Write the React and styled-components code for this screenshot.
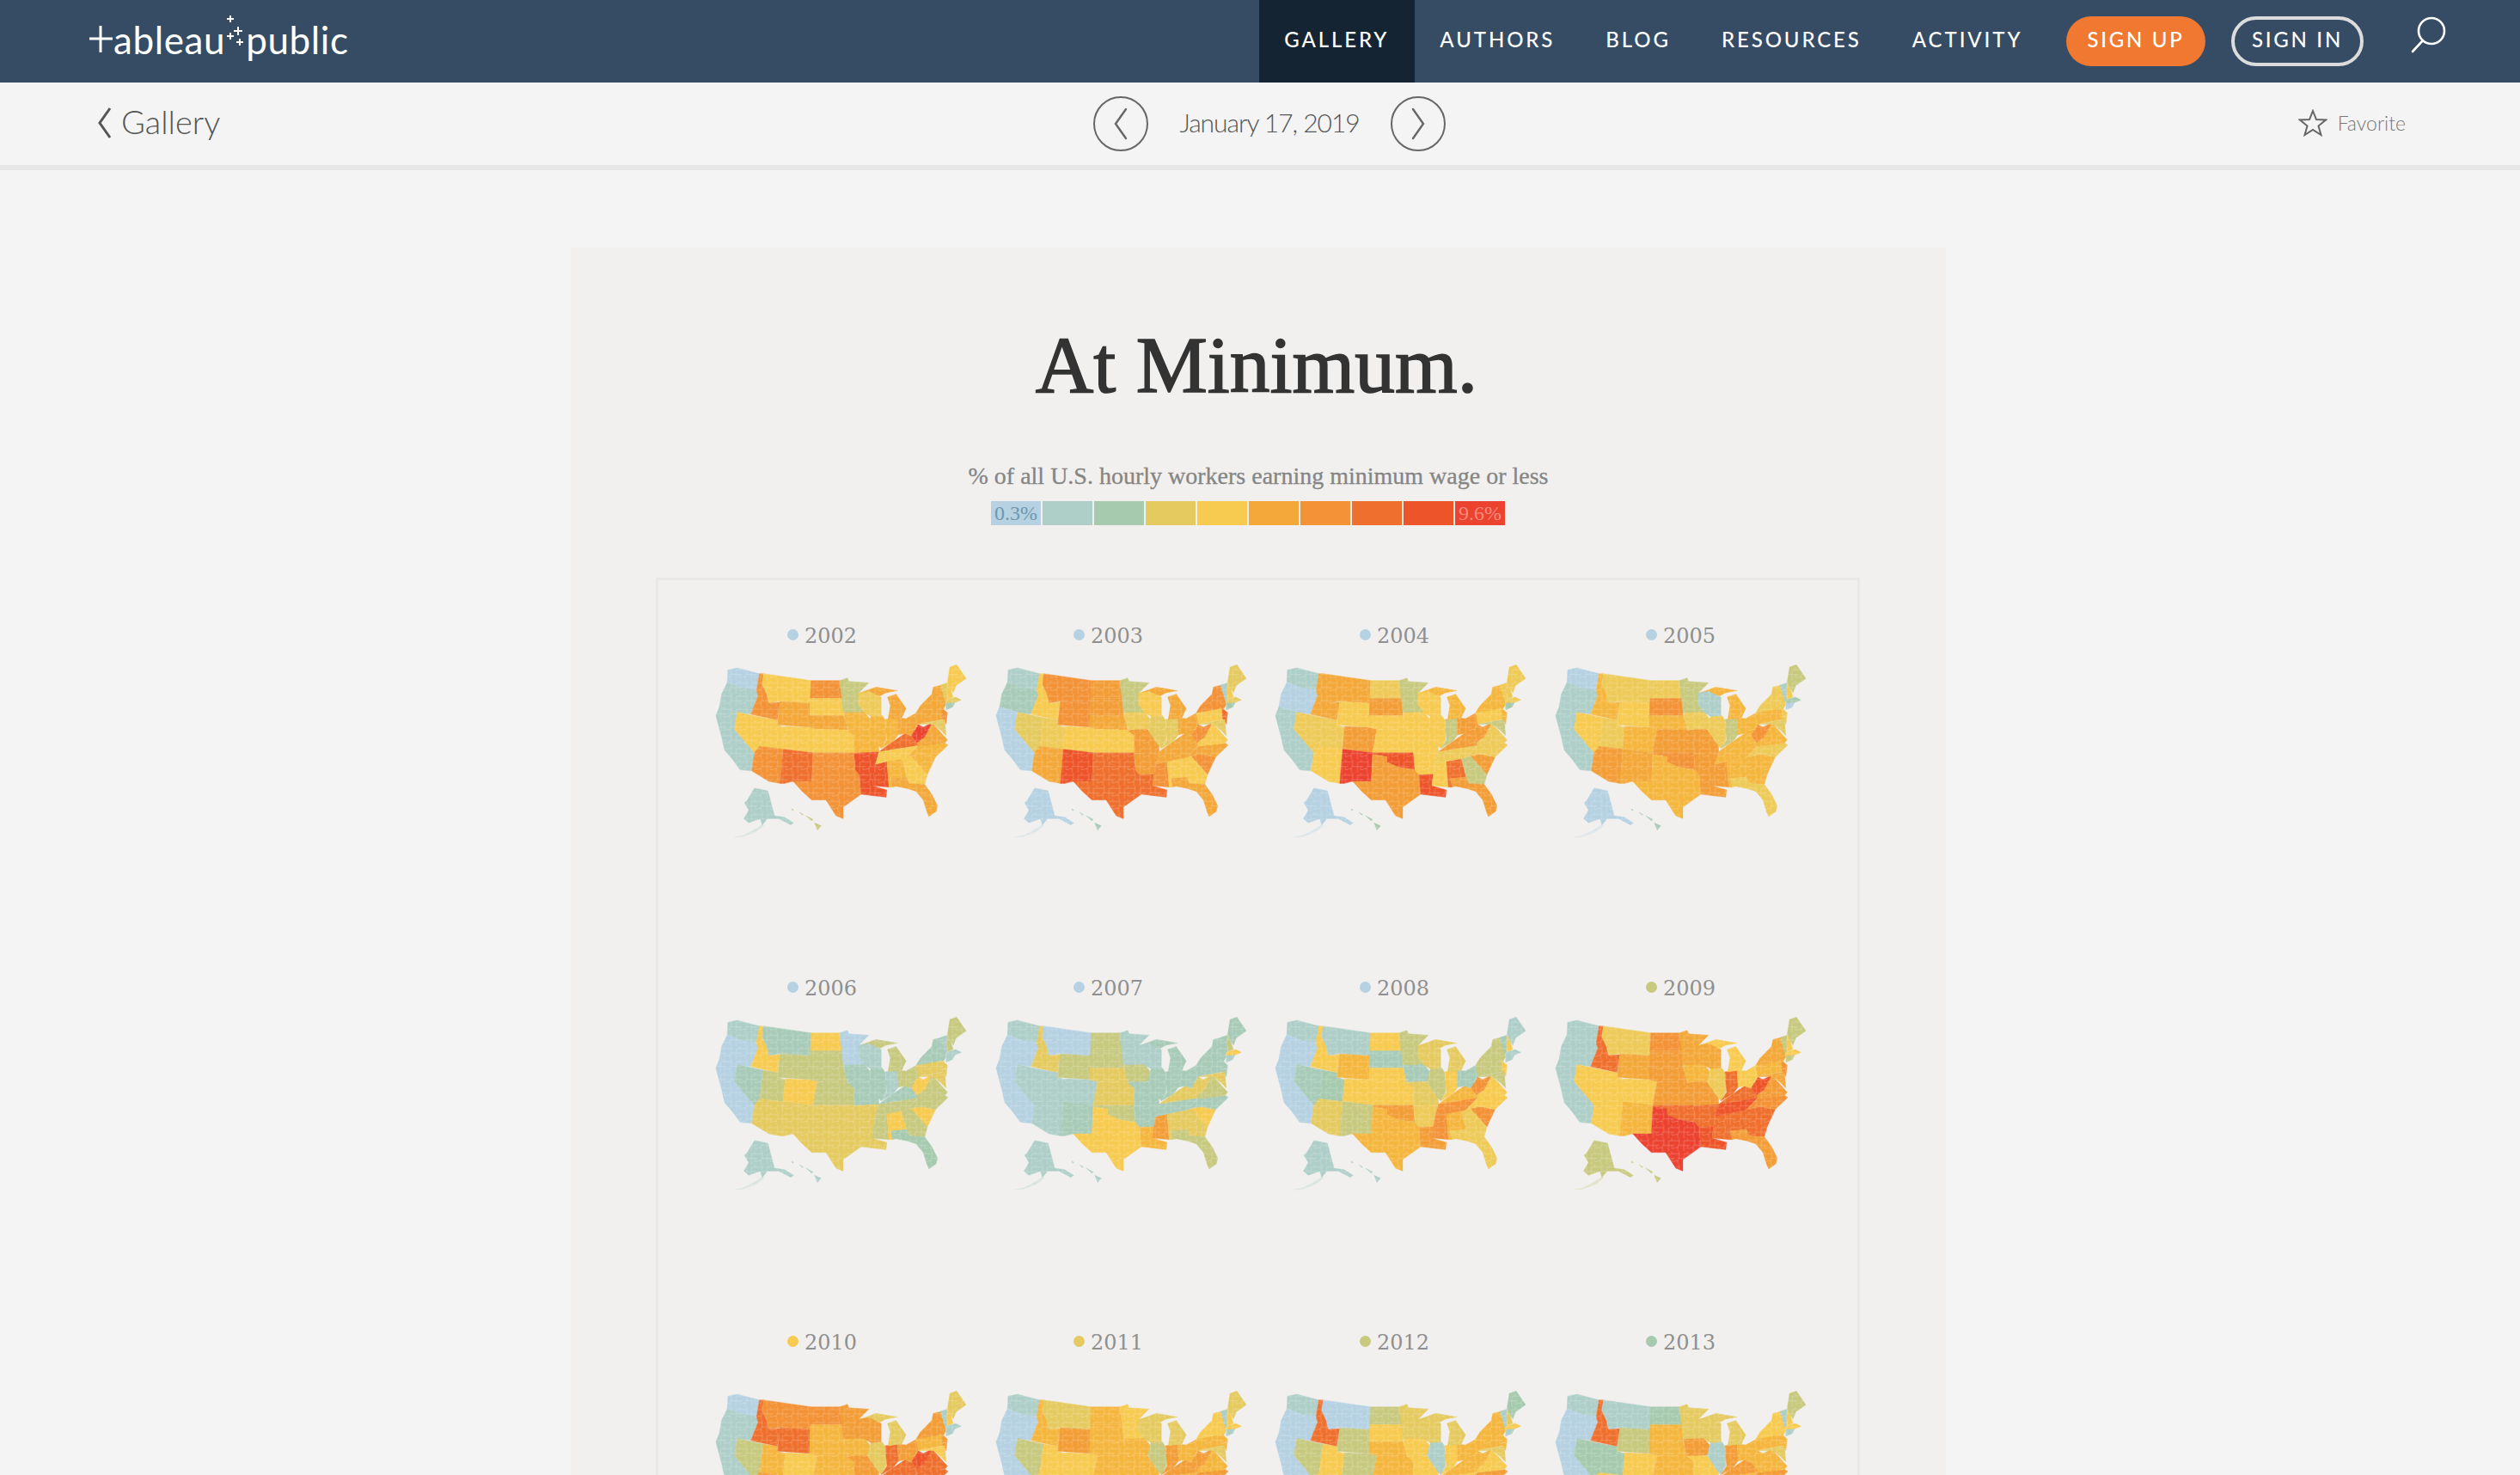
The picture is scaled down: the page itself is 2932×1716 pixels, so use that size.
import styled, { createGlobalStyle } from "styled-components";

const GlobalStyle = createGlobalStyle`
    html, body {
        margin: 0;
        height: 100%;
        overflow: hidden;
        background: #f4f4f4;
        font-family: "Lato", "Liberation Sans", sans-serif;
    }
`;

const RAMP = {
    0: "#b5d1e2",
    1: "#aecec8",
    a: "#a8cbb8",
    2: "#a6caae",
    b: "#c7c97f",
    3: "#e5ca60",
    c: "#eeca58",
    4: "#f7ca50",
    d: "#f5b63e",
    5: "#f3a839",
    e: "#f39d37",
    6: "#f39236",
    7: "#ef702e",
    8: "#ee5429",
    9: "#ec4330",
};

const LEGEND = ["0", "1", "2", "3", "4", "5", "6", "7", "8", "9"];

// drawn at 3x the size on screen, so the numbers read straight off a zoomed crop
const STATES = [
    ["WA", "112,55 145,48 222,68 212,128 160,118 110,98"],
    ["OR", "110,98 160,118 212,125 218,145 192,210 145,203 82,185 90,140"],
    ["CA", "82,185 145,203 135,262 205,345 195,408 155,405 130,370 100,335 90,290 70,215"],
    ["NV", "145,203 237,222 222,352 205,345 135,262"],
    ["UT", "237,222 295,232 285,247 312,255 305,332 222,322"],
    ["AZ", "222,322 305,332 295,452 255,445 195,408 205,345"],
    ["ID", "222,68 237,68 232,105 250,145 255,170 295,168 285,230 192,210 218,145 212,128"],
    ["MT", "237,68 403,92 400,172 295,165 255,170 248,140 232,105"],
    ["WY", "295,165 400,172 398,255 285,247"],
    ["CO", "312,252 400,256 425,262 410,345 305,332"],
    ["ND", "403,92 503,92 512,155 400,155"],
    ["SD", "400,155 512,155 516,215 398,215"],
    ["NE", "398,215 516,215 535,265 425,262 398,256"],
    ["KS", "425,262 535,265 553,285 553,345 410,345"],
    ["NM", "305,332 410,345 405,445 340,445 310,452 295,452"],
    ["OK", "410,345 553,345 558,405 500,395 460,378 460,358 410,355"],
    ["TX", "410,350 460,358 460,378 500,395 558,405 572,422 578,490 515,535 515,575 490,565 455,510 405,510 372,480 340,445 405,445"],
    ["MN", "503,92 530,83 535,95 605,100 570,135 568,175 590,205 516,205"],
    ["IA", "516,205 590,203 612,230 600,262 530,265"],
    ["MO", "530,265 600,262 640,320 640,342 553,348 553,285"],
    ["AR", "553,346 640,342 628,385 622,420 572,422 558,405"],
    ["LA", "572,422 622,420 617,460 668,475 665,500 620,495 578,490"],
    ["MS", "628,385 668,375 675,465 617,460 622,420"],
    ["AL", "668,375 720,365 737,430 682,435 688,465 675,465"],
    ["GA", "720,365 755,355 810,420 800,455 745,452 737,430"],
    ["FL", "682,435 737,430 745,452 800,455 825,490 845,530 840,550 815,568 808,552 795,510 770,480 740,470 700,462 688,465"],
    ["SC", "752,355 790,350 838,360 810,420"],
    ["NC", "735,362 775,322 870,310 882,318 838,360 790,350 752,355"],
    ["VA", "775,322 772,310 800,290 825,240 835,250 880,300 870,312"],
    ["WV", "753,285 775,245 795,255 825,240 800,290 772,310"],
    ["KY", "655,330 690,305 730,278 753,285 772,310 775,320 640,342"],
    ["TN", "640,342 775,320 735,362 668,375 628,385"],
    ["IL", "612,218 652,215 668,240 665,300 648,330 635,315 600,262"],
    ["IN", "662,228 705,222 708,282 690,305 648,330 668,300"],
    ["OH", "705,222 735,225 772,205 778,245 753,285 730,278 708,282"],
    ["MI", "670,150 700,140 735,190 720,222 672,228 680,180"],
    ["UP", "575,135 630,115 705,128 665,135 640,148 600,140"],
    ["WI", "568,135 605,130 648,150 648,215 612,218 590,205 568,175"],
    ["PA", "770,205 865,185 875,225 778,245"],
    ["NY", "770,205 785,180 825,140 830,115 860,108 875,175 868,188"],
    ["NJ", "860,188 880,205 875,245 862,225"],
    ["MD", "778,245 870,228 875,285 860,270 830,245"],
    ["VT", "855,108 880,100 880,160 872,165"],
    ["NH", "880,95 890,120 900,150 878,158"],
    ["ME", "888,45 912,37 945,85 910,110 900,135 890,120 880,95"],
    ["MA", "875,160 908,150 928,160 905,170 875,172"],
    ["CT", "875,172 905,170 898,185 875,195"],
    ["AK", "205,468 252,478 275,565 310,570 342,590 332,597 290,575 250,575 232,598 225,575 185,590 168,575 185,545 170,520 180,510"],
    ["AK", "232,596 205,614 165,634 135,640 165,638 208,622 238,600", 0.35],
    ["HI", "415,590 438,600 425,615"],
    ["HI", "385,565 410,578 405,583"],
    ["HI", "362,553 375,560 372,563"],
    ["HI", "335,540 342,545 337,547"],
];

const STATE_ORDER =
    "WA OR CA NV UT AZ ID MT WY CO ND SD NE KS NM OK TX MN IA MO AR LA MS AL GA FL SC NC VA WV KY TN IL IN OH MI WI PA NY NJ MD VT NH ME MA CT AK HI".split(" ");

const YEARS = [
    { year: 2002, dot: "0", values: "0114466454" + "6454766bdd" + "888d45dd59" + "74dd55c556" + "33443a1b" },
    { year: 2003, dot: "0", values: "1a03c54664" + "ee54877bce" + "e764456546" + "5533554467" + "3143320a" },
    { year: 2004, dot: "0", values: "101cc4554e" + "ce4498eb44" + "4847beecce" + "ec4bed44dd" + "bcccc202" },
    { year: 2005, dot: "0", values: "0114cedc4d" + "c6de56dbce" + "eeeddcdcd6" + "ddcbdd1dcc" + "314b200a" },
    { year: 2006, dot: "0", values: "100ab34ab4" + "4bbb3330aa" + "33b4b24bb4" + "aba1bb13a3" + "31bb1111" },
    { year: 2007, dot: "0", values: "10011130b1" + "bb33ab41ba" + "ade33b4ab3" + "3aaaaa1aaa" + "3aba4111" },
    { year: 2008, dot: "0", values: "100a2341d4" + "4a44bedba3" + "ce6dcc6446" + "d6b4a33bb4" + "ba411111" },
    { year: 2009, dot: "b", values: "1114447c54" + "6eeed795de" + "78777e76e8" + "78c7445d56" + "5b4b4bbb" },
    { year: 2010, dot: "4", values: "011bde7674" + "6ddd777ede" + "78777e7778" + "7737e3edee" + "41431111" },
    { year: 2011, dot: "3", values: "100b44d3e4" + "dddd6764dd" + "66edd4dede" + "edbed33d4d" + "31434111" },
    { year: 2012, dot: "b", values: "100b4470bb" + "b4dd56d344" + "dd4dd4de4d" + "d414d33ddd" + "31324111" },
    { year: 2013, dot: "2", values: "10022471b4" + "2dddedd3e4" + "ddedd4dedd" + "ed1ed33d4d" + "314b4111" },
];

const rows = [
    { items: YEARS.slice(0, 4), height: 410, gap: 16 },
    { items: YEARS.slice(4, 8), height: 412, gap: 16 },
    { items: YEARS.slice(8, 12), height: 410, gap: 39 },
];

function stateColor(values, code) {
    const key = code === "UP" ? "MI" : code;
    return RAMP[values[STATE_ORDER.indexOf(key)]];
}

function UsMap({ year, values }) {
    const patternId = `counties-${year}`;
    return (
        <MapSvg viewBox="50 30 900 625">
            <defs>
                <pattern id={patternId} width="54" height="46" patternUnits="userSpaceOnUse">
                    <path
                        d="M0 9H16V0M16 9V25H33V9H54M33 25H54M0 33H12V46M12 33V25H16M33 25V46M45 9V0M45 25V36H54"
                        fill="none"
                        stroke="#fff"
                        strokeOpacity="0.3"
                        strokeWidth="2"
                    />
                </pattern>
            </defs>
            {STATES.map(([code, points, opacity], i) => (
                <polygon
                    key={i}
                    points={points}
                    fill={stateColor(values, code)}
                    stroke={stateColor(values, code)}
                    strokeWidth="1"
                    opacity={opacity}
                />
            ))}
            {STATES.map(([code, points], i) => (
                <polygon key={i} points={points} fill={`url(#${patternId})`} />
            ))}
        </MapSvg>
    );
}

function Logo() {
    return (
        <LogoLink>
            <svg width="28" height="32" viewBox="0 0 28 32">
                <path d="M0 15H27M13 0V31" stroke="#fff" strokeWidth="3" fill="none" />
            </svg>
            <span>ableau</span>
            <svg width="24" height="44" viewBox="0 0 24 44">
                <path
                    d="M6 1V9M2 5H10M15 14V24M10 19H20M2 25H10M6 21V29M13 32H21M17 28V36"
                    stroke="#fff"
                    strokeWidth="2"
                    fill="none"
                />
            </svg>
            <span>public</span>
        </LogoLink>
    );
}

function App() {
    return (
        <>
            <GlobalStyle />
            <Header>
                <Logo />
                <Nav>
                    <NavItem $active>GALLERY</NavItem>
                    <NavItem>AUTHORS</NavItem>
                    <NavItem>BLOG</NavItem>
                    <NavItem>RESOURCES</NavItem>
                    <NavItem>ACTIVITY</NavItem>
                </Nav>
                <SignUp>SIGN UP</SignUp>
                <SignIn>SIGN IN</SignIn>
                <SearchIcon width="42" height="44" viewBox="0 0 42 44">
                    <circle cx="25" cy="18" r="15" fill="none" stroke="#fff" strokeWidth="2.6" />
                    <path d="M15 29L3 42" stroke="#fff" strokeWidth="2.6" strokeLinecap="round" />
                </SearchIcon>
            </Header>
            <SubBar>
                <BackLink>
                    <svg width="18" height="38" viewBox="0 0 18 38">
                        <path d="M15 2L3 19L15 36" fill="none" stroke="#555" strokeWidth="3" />
                    </svg>
                    Gallery
                </BackLink>
                <DateNav>
                    <RoundBtn>
                        <svg width="20" height="38" viewBox="0 0 20 38">
                            <path d="M16 2L4 19L16 36" fill="none" stroke="#666" strokeWidth="2.4" strokeLinecap="round" />
                        </svg>
                    </RoundBtn>
                    <DateText>January 17, 2019</DateText>
                    <RoundBtn>
                        <svg width="20" height="38" viewBox="0 0 20 38">
                            <path d="M4 2L16 19L4 36" fill="none" stroke="#666" strokeWidth="2.4" strokeLinecap="round" />
                        </svg>
                    </RoundBtn>
                </DateNav>
                <Favorite>
                    <svg width="34" height="32" viewBox="0 0 34 32">
                        <polygon
                            points="17,2 21,12 32,12.5 23.5,19.5 26.5,30 17,24 7.5,30 10.5,19.5 2,12.5 13,12"
                            fill="none"
                            stroke="#666"
                            strokeWidth="2"
                        />
                    </svg>
                    Favorite
                </Favorite>
            </SubBar>
            <Card>
                <Title>At Minimum.</Title>
                <Subtitle>% of all U.S. hourly workers earning minimum wage or less</Subtitle>
                <Legend>
                    {LEGEND.map((key, i) => (
                        <LegendCell key={key} $color={RAMP[key]} $text={i === 0 ? "#6f98b0" : "#f48a7c"}>
                            {i === 0 && "0.3%"}
                            {i === 9 && "9.6%"}
                        </LegendCell>
                    ))}
                </Legend>
                <Panel>
                    {rows.map((row) => (
                        <Row key={row.items[0].year} $height={row.height}>
                            <LabelRow>
                                {row.items.map((item) => (
                                    <YearLabel key={item.year}>
                                        <Dot $color={RAMP[item.dot]} />
                                        {item.year}
                                    </YearLabel>
                                ))}
                            </LabelRow>
                            <MapRow $gap={row.gap}>
                                {row.items.map((item) => (
                                    <UsMap key={item.year} year={item.year} values={item.values} />
                                ))}
                            </MapRow>
                        </Row>
                    ))}
                </Panel>
            </Card>
        </>
    );
}

const Header = styled.header`
    display: flex;
    align-items: center;
    height: 96px;
    padding: 0 86px 0 104px;
    background: #354c64;
`;

const LogoLink = styled.a`
    display: flex;
    align-items: center;
    color: #fff;
    font-size: 44px;
    font-weight: 400;
    letter-spacing: 0.6px;
    line-height: 1;
    margin-top: -4px;

    svg:nth-of-type(2) {
        margin-top: -14px;
    }
`;

const Nav = styled.nav`
    display: flex;
    align-items: stretch;
    height: 96px;
    margin-left: auto;
`;

const NavItem = styled.a`
    display: flex;
    align-items: center;
    padding: 0 29.5px 5px;
    color: #fff;
    font-size: 24px;
    font-weight: 500;
    letter-spacing: 2.9px;
    background: ${(p) => (p.$active ? "#142433" : "transparent")};
`;

const SignUp = styled.button`
    height: 58px;
    width: 162px;
    margin-left: 21px;
    padding: 0 0 5px;
    border: 0;
    border-radius: 29px;
    background: #f07830;
    color: #fff;
    font-family: inherit;
    font-size: 24px;
    font-weight: 500;
    letter-spacing: 2.7px;
`;

const SignIn = styled(SignUp)`
    width: 154px;
    margin-left: 30px;
    background: transparent;
    border: 4px solid #dcdcdc;
`;

const SearchIcon = styled.svg`
    margin: -16px 0 0 54px;
`;

const SubBar = styled.div`
    display: flex;
    align-items: center;
    height: 96px;
    padding: 0 133px 0 113px;
    background: #f4f4f4;
    border-bottom: 6px solid #e6e6e6;
`;

const BackLink = styled.a`
    display: flex;
    align-items: center;
    gap: 10px;
    width: 1159px;
    color: #555;
    font-size: 38px;
    font-weight: 300;
    margin-top: -6px;

    svg {
        margin-top: 4px;
    }
`;

const DateNav = styled.div`
    display: flex;
    align-items: center;
`;

const RoundBtn = styled.button`
    display: flex;
    align-items: center;
    justify-content: center;
    width: 64px;
    height: 64px;
    padding: 0;
    border: 2px solid #666;
    border-radius: 50%;
    background: transparent;
`;

const DateText = styled.span`
    width: 282px;
    text-align: center;
    color: #555;
    font-size: 30px;
    font-weight: 300;
    letter-spacing: -1.05px;
    margin-top: -4px;
`;

const Favorite = styled.a`
    display: flex;
    align-items: center;
    gap: 12px;
    margin: -2px 0 0 auto;
    color: #777;
    font-size: 23px;
    font-weight: 300;

    svg {
        margin-left: -2px;
    }
`;

const Card = styled.main`
    width: 1600px;
    margin: 90px 0 0 664px;
    padding-top: 84px;
    background: #f1f0ee;
`;

const Title = styled.h1`
    margin: 0;
    text-align: center;
    color: #333;
    font-family: "Liberation Serif", serif;
    font-size: 93.5px;
    font-weight: 400;
    line-height: 105px;
    -webkit-text-stroke: 1.6px #333;
    transform: translateX(-2px);
`;

const Subtitle = styled.p`
    margin: 60px 0 0;
    text-align: center;
    color: #858585;
    font-family: "Liberation Serif", serif;
    font-size: 28px;
    line-height: 34px;
    -webkit-text-stroke: 0.3px #858585;
`;

const Legend = styled.div`
    display: flex;
    gap: 2px;
    width: 598px;
    height: 28px;
    margin: 12px 0 0 489px;
`;

const LegendCell = styled.div`
    flex: 1;
    background: ${(p) => p.$color};
    color: ${(p) => p.$text};
    font-family: "Liberation Serif", serif;
    font-size: 24px;
    line-height: 28px;
    text-align: center;
`;

const Panel = styled.section`
    margin: 61px 100px 0 99px;
    padding-top: 50px;
    border: 3px solid #e9e8e6;
    border-bottom: 0;
`;

const Row = styled.div`
    height: ${(p) => p.$height}px;
`;

const LabelRow = styled.div`
    display: grid;
    grid-template-columns: repeat(4, 333px);
    padding-left: 24px;
`;

const YearLabel = styled.div`
    display: flex;
    align-items: center;
    justify-content: center;
    gap: 7px;
    height: 30px;
    color: #8f8f8f;
    font-family: "DejaVu Serif", serif;
    font-size: 24px;
`;

const Dot = styled.span`
    width: 13px;
    height: 13px;
    border-radius: 50%;
    background: ${(p) => p.$color};
    margin-top: -4px;
`;

const MapRow = styled.div`
    display: grid;
    grid-template-columns: repeat(4, 325.5px);
    padding: ${(p) => p.$gap}px 0 0 60px;
`;

const MapSvg = styled.svg`
    display: block;
    width: 300px;
    height: 208px;
`;

export default App;
